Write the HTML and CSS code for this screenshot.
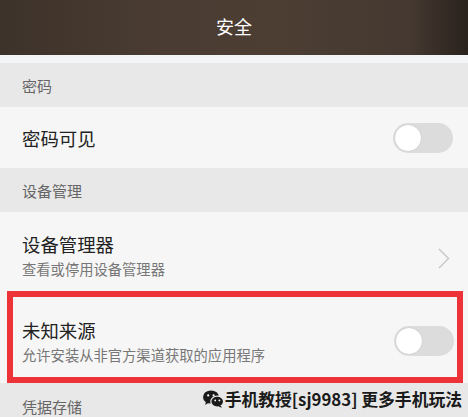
FILE: index.html
```html
<!DOCTYPE html>
<html lang="zh-CN">
  <head>
    <meta charset="UTF-8" />
    <meta name="viewport" content="width=device-width, initial-scale=1.0" />
    <title>安全</title>
    <link rel="stylesheet" href="styles.css">
  </head>
  <body>
    <header class="top-bar">安全</header>
    <div class="strip"></div>

    <div class="section">密码</div>
    <div class="row single">
      <div class="row-text">
        <div class="row-title">密码可见</div>
      </div>
      <span class="switch"><span class="knob"></span></span>
    </div>

    <div class="section">设备管理</div>
    <div class="row">
      <div class="row-text">
        <div class="row-title">设备管理器</div>
        <div class="row-sub">查看或停用设备管理器</div>
      </div>
      <svg class="chevron" width="12" height="21" viewBox="0 0 12 21">
        <polyline points="1,1 10.5,10.5 1,20" fill="none" stroke="#c6c6c6" stroke-width="1.4" />
      </svg>
    </div>

    <div class="mark-wrap">
      <div class="row marked">
        <div class="row-text">
          <div class="row-title">未知来源</div>
          <div class="row-sub">允许安装从非官方渠道获取的应用程序</div>
        </div>
        <span class="switch"><span class="knob"></span></span>
      </div>
    </div>

    <div class="section last">凭据存储</div>

    <div class="watermark">
      <svg class="wechat" width="21" height="18" viewBox="0 0 21 18">
        <ellipse cx="8" cy="7" rx="8" ry="6.6" fill="#1a1a1a" />
        <path d="M3 11.5 L2.2 15 L6 12.6 Z" fill="#1a1a1a" />
        <circle cx="5.2" cy="5.4" r="1.1" fill="#fff" />
        <circle cx="10.6" cy="5.4" r="1.1" fill="#fff" />
        <ellipse cx="14.2" cy="11.6" rx="6.4" ry="5.4" fill="#1a1a1a" stroke="#eaeaea" stroke-width="1.2" />
        <path d="M17.6 15.6 L19 17.8 L15.4 16.4 Z" fill="#1a1a1a" />
        <circle cx="12.2" cy="10.4" r="0.9" fill="#fff" />
        <circle cx="16.4" cy="10.4" r="0.9" fill="#fff" />
      </svg>
      <span>手机教授[sj9983] 更多手机玩法</span>
    </div>
  </body>
</html>
```

FILE: styles.css
```css
body {
  margin: 0;
  font-family: "Noto Sans CJK SC", "Noto Sans", sans-serif;
  background-color: #e8e8e8;
  height: 417px;
  overflow: hidden;
  position: relative;
}
.top-bar {
  height: 55px;
  line-height: 52px;
  text-align: center;
  color: #fff;
  font-size: 18px;
  background: linear-gradient(90deg, #3d322a 0%, #4a3c32 35%, #4c3e33 60%, #443830 88%, #2a221d 100%);
}
.strip {
  height: 8px;
  background-color: #f3f4f6;
}
.section {
  height: 44px;
  display: flex;
  align-items: center;
  padding-left: 22px;
  font-size: 15px;
  color: #666;
  background-color: #e8e8e8;
}
.section.last {
  height: 46px;
}
.row {
  display: flex;
  align-items: center;
  background-color: #f6f6f6;
  padding: 20px 15px 12px 22px;
  min-height: 47px;
}
.row.single {
  padding-top: 0;
  padding-bottom: 0;
  height: 61px;
  min-height: 0;
}
.row-text {
  flex: 1;
}
.row-title {
  font-size: 18.4px;
  line-height: 24px;
  color: #222;
}
.row-sub {
  font-size: 14.3px;
  line-height: 20px;
  margin-top: 3px;
  color: #777;
}
.chevron {
  margin-right: 3px;
  margin-top: 5px;
}
.mark-wrap {
  background-color: #f6f6f6;
  padding: 0 5px 0 7px;
}
.marked {
  border: 6px solid #ee3338;
  padding: 20px 3px 12px 9px;
  min-height: 48px;
}
.switch {
  width: 60px;
  height: 30px;
  border-radius: 15px;
  background-color: #dcdcdc;
  display: flex;
  align-items: center;
  padding-left: 2px;
  box-sizing: border-box;
}
.knob {
  width: 26px;
  height: 26px;
  border-radius: 50%;
  background-color: #fff;
  box-shadow: 0 0 1px rgba(0, 0, 0, 0.25);
}
.watermark {
  position: absolute;
  right: 6px;
  bottom: 6px;
  display: flex;
  align-items: center;
  gap: 1px;
  font-size: 16.8px;
  font-weight: bold;
  color: #1a1a1a;
}
```
